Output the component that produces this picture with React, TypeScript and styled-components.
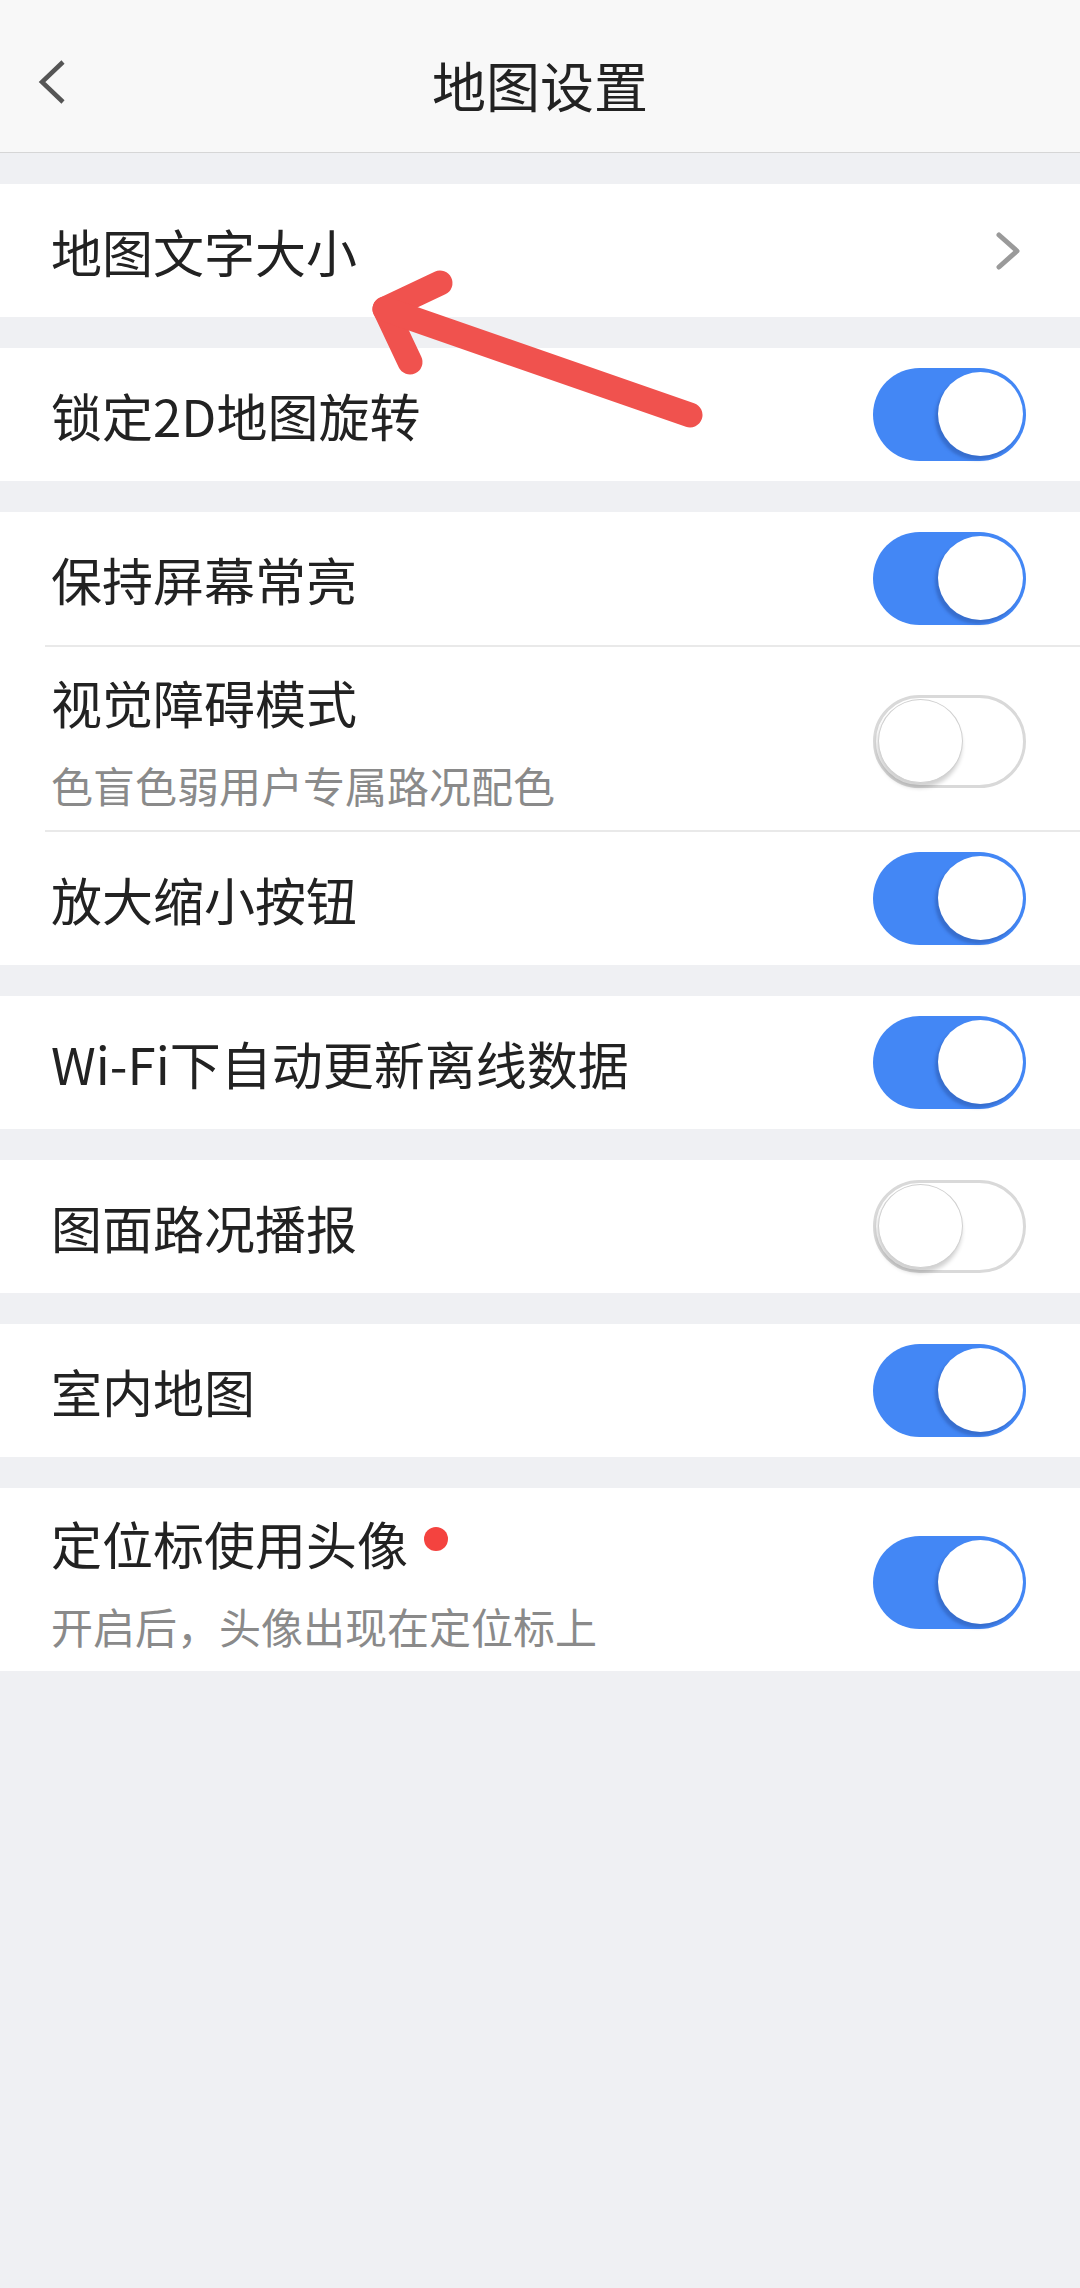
import * as React from 'react';
import styled, { createGlobalStyle } from 'styled-components';

const GlobalStyle = createGlobalStyle`
  html, body {
    margin: 0;
    padding: 0;
    background: #eff0f3;
  }
  body {
    font-family: 'Noto Sans CJK SC', 'Noto Sans', sans-serif;
  }
`;

const Page = styled.div`
  position: relative;
  width: 1080px;
  min-height: 2288px;
  background: #eff0f3;
  overflow: hidden;
`;

const Header = styled.div`
  height: 153px;
  padding-top: 18px;
  box-sizing: border-box;
  background: #f8f8f8;
  border-bottom: 1px solid #d6d6d6;
  display: grid;
  grid-template-columns: 120px 1fr 120px;
  align-items: center;
`;

const BackButton = styled.div`
  display: flex;
  align-items: center;
  padding-left: 36px;
  margin-top: -6px;
`;

const Title = styled.h1`
  margin: 0;
  text-align: center;
  font-size: 54px;
  font-weight: 400;
  color: #222;
  line-height: 64px;
`;

const Group = styled.div`
  margin-top: 31px;
  background: #fff;
  display: flex;
  flex-direction: column;
`;

const Row = styled.div<{ $tall?: boolean }>`
  display: flex;
  align-items: center;
  justify-content: space-between;
  box-sizing: border-box;
  min-height: ${(p) => (p.$tall ? '183px' : '133px')};
  padding: ${(p) => (p.$tall ? '25px 54px 20px 51px' : '0 54px 0 51px')};
`;

const Divider = styled.div`
  height: 2px;
  margin-left: 45px;
  background: #e9e9e9;
`;

const Texts = styled.div`
  display: flex;
  flex-direction: column;
`;

const Label = styled.div`
  display: flex;
  align-items: center;
  font-size: 51px;
  line-height: 60px;
  color: #222;
`;

const Hint = styled.div`
  margin-top: 28px;
  font-size: 42px;
  line-height: 50px;
  color: #8a8a8a;
`;

const Dot = styled.span`
  width: 24px;
  height: 24px;
  border-radius: 50%;
  background: #f4433f;
  margin-left: 16px;
  margin-top: -8px;
`;

const Track = styled.div<{ $on: boolean }>`
  width: 153px;
  height: 93px;
  box-sizing: border-box;
  border-radius: 47px;
  display: flex;
  justify-content: ${(p) => (p.$on ? 'flex-end' : 'flex-start')};
  align-items: flex-start;
  padding: ${(p) => (p.$on ? '4px 3px' : '1px 2px')};
  background: ${(p) => (p.$on ? '#4387f5' : '#fff')};
  border: ${(p) => (p.$on ? 'none' : '3px solid #d9d9d9')};
  flex-shrink: 0;
`;

const Knob = styled.div<{ $on: boolean }>`
  width: 85px;
  height: 84px;
  border-radius: 50%;
  background: #fff;
  box-sizing: border-box;
  border: ${(p) => (p.$on ? 'none' : '1px solid #d0d0d0')};
  box-shadow: ${(p) =>
    p.$on
      ? '-3px 4px 3px rgba(40, 80, 160, 0.45)'
      : '-1px 5px 4px rgba(0, 0, 0, 0.18)'};
`;

const Chevron = styled.svg`
  width: 30px;
  height: 44px;
  margin-right: 4px;
`;

const Overlay = styled.svg`
  position: absolute;
  left: 0;
  top: 0;
  pointer-events: none;
`;

const Toggle = ({ on }: { on: boolean }) => (
  <Track $on={on}>
    <Knob $on={on} />
  </Track>
);

type Item = { label: string; hint?: string; on: boolean; dot?: boolean };

const groups: Item[][] = [
  [{ label: '锁定2D地图旋转', on: true }],
  [
    { label: '保持屏幕常亮', on: true },
    { label: '视觉障碍模式', hint: '色盲色弱用户专属路况配色', on: false },
    { label: '放大缩小按钮', on: true },
  ],
  [{ label: 'Wi-Fi下自动更新离线数据', on: true }],
  [{ label: '图面路况播报', on: false }],
  [{ label: '室内地图', on: true }],
  [{ label: '定位标使用头像', hint: '开启后，头像出现在定位标上', on: true, dot: true }],
];

export default function App() {
  return (
    <Page>
      <GlobalStyle />
      <Header>
        <BackButton>
          <svg width="40" height="50" viewBox="0 0 40 50">
            <polyline
              points="27,5 6,25 27,45"
              fill="none"
              stroke="#555"
              strokeWidth="4.5"
            />
          </svg>
        </BackButton>
        <Title>地图设置</Title>
        <div />
      </Header>

      <Group>
        <Row>
          <Label>地图文字大小</Label>
          <Chevron viewBox="0 0 30 44">
            <polyline
              points="7,6 25,22 7,38"
              fill="none"
              stroke="#9a9a9a"
              strokeWidth="5"
              strokeLinecap="round"
              strokeLinejoin="round"
            />
          </Chevron>
        </Row>
      </Group>

      {groups.map((items, gi) => (
        <Group key={gi}>
          {items.map((item, i) => (
            <React.Fragment key={item.label}>
              {i > 0 && <Divider />}
              <Row $tall={!!item.hint}>
                <Texts>
                  <Label>
                    {item.label}
                    {item.dot && <Dot />}
                  </Label>
                  {item.hint && <Hint>{item.hint}</Hint>}
                </Texts>
                <Toggle on={item.on} />
              </Row>
            </React.Fragment>
          ))}
        </Group>
      ))}

      {/* red annotation arrow drawn over the screenshot */}
      <Overlay width="1080" height="2288" viewBox="0 0 1080 2288">
        <g
          fill="none"
          stroke="#f0524e"
          strokeWidth="25"
          strokeLinecap="round"
          strokeLinejoin="round"
        >
          <polyline points="440,283 385,309 410,362" />
          <line x1="385" y1="309" x2="690" y2="415" />
        </g>
      </Overlay>
    </Page>
  );
}
